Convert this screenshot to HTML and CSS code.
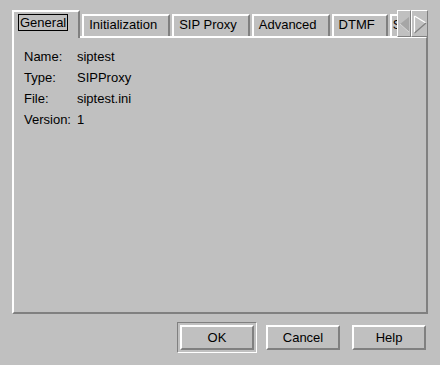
FILE: index.html
```html
<!DOCTYPE html>
<html lang="en">
<head>
    <meta charset="UTF-8">
    <title>SIP Proxy Properties</title>
    <link rel="stylesheet" href="styles.css">
</head>
<body>
    <div class="dialog">
        <div class="tabbar">
            <div class="tabs">
                <div class="tab active"><span class="focus">General</span></div>
                <div class="tab">Initialization</div>
                <div class="tab">SIP Proxy</div>
                <div class="tab">Advanced</div>
                <div class="tab">DTMF</div>
                <div class="tab partial">Security</div>
            </div>
            <div class="scroll">
                <div class="arrow arrow-left">
                    <svg width="12" height="25" viewBox="0 0 12 25">
                        <polygon points="2,13 11,6 11,21" fill="#a6a6a6"/>
                        <line x1="2" y1="13" x2="11" y2="21" stroke="#d8d8d8" stroke-width="1"/>
                    </svg>
                </div>
                <div class="arrow arrow-right">
                    <svg width="15" height="25" viewBox="0 0 15 25">
                        <line x1="2.5" y1="5" x2="2.5" y2="22" stroke="#fff" stroke-width="1.2"/>
                        <line x1="2.5" y1="5" x2="14" y2="12" stroke="#fff" stroke-width="1.2"/>
                        <line x1="14" y1="12" x2="2.5" y2="22" stroke="#808080" stroke-width="1.2"/>
                    </svg>
                </div>
            </div>
        </div>

        <div class="panel">
            <div class="props">
                <span>Name:</span><span>siptest</span>
                <span>Type:</span><span>SIPProxy</span>
                <span>File:</span><span>siptest.ini</span>
                <span>Version:</span><span>1</span>
            </div>
        </div>

        <div class="buttons">
            <div class="default"><button class="btn">OK</button></div>
            <button class="btn">Cancel</button>
            <button class="btn">Help</button>
        </div>
    </div>
</body>
</html>
```

FILE: styles.css
```css
body {
    margin: 0;
    background: #c0c0c0;
    font-family: "Liberation Sans", Arial, sans-serif;
    font-size: 13px;
    color: #000;
}
.dialog {
    width: 440px;
    height: 365px;
    box-sizing: border-box;
    padding: 10px 12px 0 12px;
}

/* Tabs */
.tabbar {
    display: flex;
    height: 28px;
}
.tabs {
    flex: 1;
    display: flex;
    align-items: flex-end;
    gap: 2px;
    overflow: hidden;
}
.tab {
    flex-shrink: 0;
    box-sizing: border-box;
    height: 22px;
    margin-bottom: 2px;
    padding: 0 11px 0 5px;
    border: 2px solid;
    border-color: #fff #808080 transparent #fff;
    border-bottom: 0;
    line-height: 17px;
    white-space: nowrap;
}
.tab.active {
    position: relative;
    z-index: 1;
    height: 28px;
    margin-bottom: 0;
    background: #c0c0c0;
}
.tab.partial {
    padding-left: 1px;
}
.focus {
    display: inline-block;
    margin: 2px -1px 0 -1px;
    padding: 0 1px;
    border: 1px solid #000;
    line-height: 15px;
}
.scroll {
    display: flex;
    height: 27px;
}
.arrow {
    box-sizing: border-box;
    height: 27px;
    border: 1px solid;
    border-color: #fff #808080 #808080 #fff;
}
.arrow-left { width: 14px; }
.arrow-right { width: 17px; }
.arrow svg { display: block; }

/* Page */
.panel {
    box-sizing: border-box;
    height: 278px;
    margin-top: -2px;
    padding: 8px 10px;
    border: 2px solid;
    border-color: #fff #808080 #808080 #fff;
}
.props {
    display: grid;
    grid-template-columns: auto 1fr;
    column-gap: 6px;
    line-height: 21px;
}

/* Buttons */
.buttons {
    display: flex;
    justify-content: flex-end;
    align-items: center;
    gap: 12px;
    margin-top: 8px;
    padding-right: 2px;
}
.default {
    padding: 2px;
    margin-right: -3px;
    border: 1px solid;
    border-color: #808080 #fff #fff #808080;
}
.btn {
    display: block;
    width: 74px;
    height: 25px;
    margin: 0;
    padding: 0;
    background: #c0c0c0;
    border: 2px solid;
    border-color: #fff #808080 #808080 #fff;
    font-family: "Liberation Sans", Arial, sans-serif;
    font-size: 13px;
    color: #000;
}
```
